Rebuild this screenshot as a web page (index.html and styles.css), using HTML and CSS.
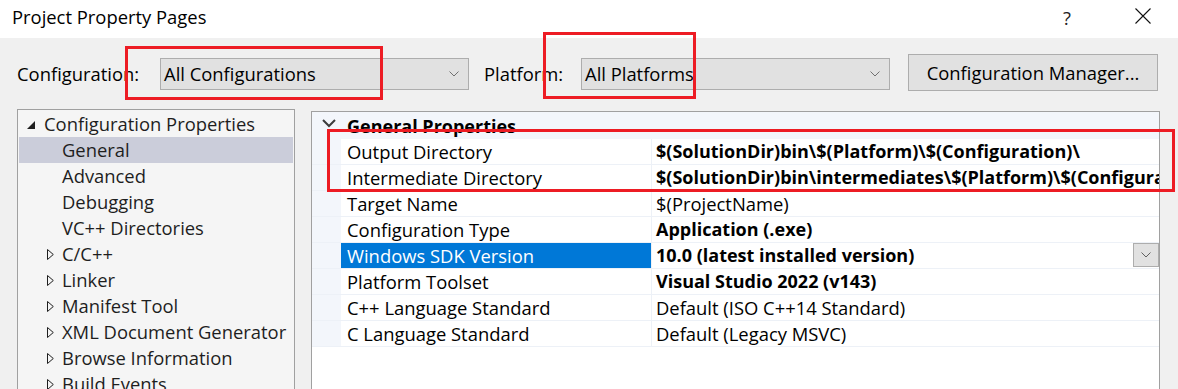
FILE: index.html
```html
<!doctype html>
<html>
  <head>
    <title>Project Property Pages</title>
    <meta charset="UTF-8">
    <link rel="stylesheet" href="styles.css">
  </head>
  <body>
    <div class="titlebar">
      <span class="title">Project Property Pages</span>
      <span class="help">?</span>
      <svg class="close" width="16" height="16" viewBox="0 0 16 16">
        <path d="M0.5 0.5 L15.5 15.5 M15.5 0.5 L0.5 15.5" stroke="#111" stroke-width="1.1" fill="none"/>
      </svg>
    </div>

    <div class="toolbar">
      <label class="lbl lbl-config">Configuration:</label>
      <div class="combo">
        <span>All Configurations</span>
        <svg class="chev" width="10" height="6" viewBox="0 0 10 6"><path d="M0.5 0.5 L5 5 L9.5 0.5" stroke="#707070" fill="none"/></svg>
      </div>
      <label class="lbl lbl-platform">Platform:</label>
      <div class="combo">
        <span>All Platforms</span>
        <svg class="chev" width="10" height="6" viewBox="0 0 10 6"><path d="M0.5 0.5 L5 5 L9.5 0.5" stroke="#707070" fill="none"/></svg>
      </div>
      <button class="btn">Configuration Manager...</button>
    </div>

    <div class="content">
      <div class="tree">
        <div class="node root">
          <svg class="arrow" width="8" height="8" viewBox="0 0 8 8"><path d="M0 8 L8 8 L8 0 Z" fill="#1e1e1e"/></svg>
          <span>Configuration Properties</span>
        </div>
        <div class="node leaf selected"><span>General</span></div>
        <div class="node leaf"><span>Advanced</span></div>
        <div class="node leaf"><span>Debugging</span></div>
        <div class="node leaf"><span>VC++ Directories</span></div>
        <div class="node child">
          <svg class="arrow" width="7" height="11" viewBox="0 0 7 11"><path d="M0.5 0.5 L6.3 5.5 L0.5 10.5 Z" stroke="#1e1e1e" fill="none"/></svg>
          <span>C/C++</span>
        </div>
        <div class="node child">
          <svg class="arrow" width="7" height="11" viewBox="0 0 7 11"><path d="M0.5 0.5 L6.3 5.5 L0.5 10.5 Z" stroke="#1e1e1e" fill="none"/></svg>
          <span>Linker</span>
        </div>
        <div class="node child">
          <svg class="arrow" width="7" height="11" viewBox="0 0 7 11"><path d="M0.5 0.5 L6.3 5.5 L0.5 10.5 Z" stroke="#1e1e1e" fill="none"/></svg>
          <span>Manifest Tool</span>
        </div>
        <div class="node child">
          <svg class="arrow" width="7" height="11" viewBox="0 0 7 11"><path d="M0.5 0.5 L6.3 5.5 L0.5 10.5 Z" stroke="#1e1e1e" fill="none"/></svg>
          <span>XML Document Generator</span>
        </div>
        <div class="node child">
          <svg class="arrow" width="7" height="11" viewBox="0 0 7 11"><path d="M0.5 0.5 L6.3 5.5 L0.5 10.5 Z" stroke="#1e1e1e" fill="none"/></svg>
          <span>Browse Information</span>
        </div>
        <div class="node child">
          <svg class="arrow" width="7" height="11" viewBox="0 0 7 11"><path d="M0.5 0.5 L6.3 5.5 L0.5 10.5 Z" stroke="#1e1e1e" fill="none"/></svg>
          <span>Build Events</span>
        </div>
      </div>

      <div class="grid">
        <div class="group">
          <svg class="caret" width="14" height="9" viewBox="0 0 14 9"><path d="M1 1 L7 7 L13 1" stroke="#3c3c3c" stroke-width="2" fill="none"/></svg>
          <span>General Properties</span>
        </div>
        <div class="prop">
          <div class="gutter"></div>
          <div class="name">Output Directory</div>
          <div class="value bold">$(SolutionDir)bin\$(Platform)\$(Configuration)\</div>
        </div>
        <div class="prop">
          <div class="gutter"></div>
          <div class="name">Intermediate Directory</div>
          <div class="value bold">$(SolutionDir)bin\intermediates\$(Platform)\$(Configuration)\</div>
        </div>
        <div class="prop">
          <div class="gutter"></div>
          <div class="name">Target Name</div>
          <div class="value">$(ProjectName)</div>
        </div>
        <div class="prop">
          <div class="gutter"></div>
          <div class="name">Configuration Type</div>
          <div class="value bold">Application (.exe)</div>
        </div>
        <div class="prop active">
          <div class="gutter"></div>
          <div class="name">Windows SDK Version</div>
          <div class="value bold">
            <span class="text">10.0 (latest installed version)</span>
            <span class="drop">
              <svg width="10" height="6" viewBox="0 0 10 6"><path d="M0.5 0.5 L5 5 L9.5 0.5" stroke="#606060" fill="none"/></svg>
            </span>
          </div>
        </div>
        <div class="prop">
          <div class="gutter"></div>
          <div class="name">Platform Toolset</div>
          <div class="value bold">Visual Studio 2022 (v143)</div>
        </div>
        <div class="prop">
          <div class="gutter"></div>
          <div class="name">C++ Language Standard</div>
          <div class="value">Default (ISO C++14 Standard)</div>
        </div>
        <div class="prop">
          <div class="gutter"></div>
          <div class="name">C Language Standard</div>
          <div class="value">Default (Legacy MSVC)</div>
        </div>
      </div>
    </div>

    <!-- red annotation boxes drawn over the screenshot -->
    <div class="mark mark-config"></div>
    <div class="mark mark-platform"></div>
    <div class="mark mark-dirs"></div>
  </body>
</html>
```

FILE: styles.css
```css
* {
  box-sizing: border-box;
}

body {
  margin: 0;
  height: 389px;
  overflow: hidden;
  background: #f0f0f0;
  font-family: "Open Sans", "Noto Sans", sans-serif;
  font-size: 18.4px;
  color: #000;
  position: relative;
}

/* Title bar */
.titlebar {
  height: 38px;
  background: #fff;
  display: flex;
  align-items: center;
  padding-left: 12px;
}

.titlebar .title {
  flex: 1;
  line-height: 26px;
  margin-top: -4px;
}

.titlebar .help {
  width: 20px;
  margin-right: 52px;
  margin-top: -4px;
  color: #222;
}

.titlebar .close {
  margin-right: 27px;
  margin-top: -6px;
}

/* Configuration / platform bar */
.toolbar {
  height: 71px;
  display: flex;
  align-items: center;
  padding-left: 17px;
}

.lbl {
  line-height: 26px;
}

.lbl-config {
  width: 143px;
}

.lbl-platform {
  width: 97px;
  margin-left: 15px;
}

.combo {
  width: 309px;
  height: 32px;
  background: #e1e1e1;
  border: 1px solid #adadad;
  display: flex;
  align-items: center;
  padding-left: 3px;
  padding-right: 9px;
}

.combo span {
  flex: 1;
  line-height: 26px;
}

.btn {
  margin-left: 18px;
  margin-top: -3px;
  width: 250px;
  height: 37px;
  background: #e1e1e1;
  border: 1px solid #adadad;
  font-family: inherit;
  font-size: 18.4px;
  color: #000;
  padding: 0;
}

/* Main area */
.content {
  display: flex;
  padding-left: 17px;
  align-items: flex-start;
}

.tree {
  width: 278px;
  height: 280px;
  overflow: hidden;
  background: #f5f5f5;
  border: 1px solid #a0a0a0;
  border-bottom: none;
  padding: 1px;
  color: #1e1e1e;
}

.node {
  height: 26px;
  line-height: 26px;
  display: flex;
  align-items: center;
  white-space: nowrap;
}

.node.root {
  padding-left: 8px;
}

.node.root .arrow {
  margin-right: 9px;
  margin-top: 1px;
}

.node.leaf {
  padding-left: 43px;
}

.node.child {
  padding-left: 28px;
}

.node.child .arrow {
  margin-right: 8px;
  margin-top: 1px;
}

.node.selected {
  background: #cbcdda;
}

/* Property grid */
.grid {
  width: 849px;
  height: 278px;
  margin-left: 16px;
  margin-top: 2px;
  background: #fff;
  border: 1px solid #a0a0a0;
  border-bottom: none;
}

.group {
  height: 27px;
  background: #f3f6fb;
  display: flex;
  align-items: center;
  padding-left: 10px;
  font-weight: bold;
  font-size: 18px;
  line-height: 26px;
}

.group .caret {
  margin-right: 11px;
  margin-top: -4px;
}

.prop {
  display: flex;
  height: 26px;
  line-height: 25px;
  border-bottom: 1px solid #edf1f7;
}

.prop .gutter {
  width: 29px;
  background: #f3f6fb;
}

.prop .name {
  width: 311px;
  padding-left: 6px;
  border-right: 1px solid #edf1f7;
  white-space: nowrap;
}

.prop .value {
  flex: 1;
  padding-left: 4px;
  white-space: nowrap;
  overflow: hidden;
}

.prop .value.bold {
  font-weight: bold;
  font-size: 18px;
}

.prop.active .name {
  background: #0078d7;
  color: #fff;
}

.prop.active .value {
  display: flex;
  padding-right: 0;
}

.prop.active .text {
  flex: 1;
}

.drop {
  width: 26px;
  height: 24px;
  background: #e1e1e1;
  border: 1px solid #adadad;
  display: flex;
  align-items: center;
  justify-content: center;
}

/* Red annotation rectangles */
.mark {
  position: absolute;
  border: 3px solid #ed1c24;
}

.mark-config {
  left: 125px;
  top: 46px;
  width: 258px;
  height: 54px;
}

.mark-platform {
  left: 543px;
  top: 32px;
  width: 153px;
  height: 67px;
}

.mark-dirs {
  left: 327px;
  top: 129px;
  width: 848px;
  height: 63px;
}
```
